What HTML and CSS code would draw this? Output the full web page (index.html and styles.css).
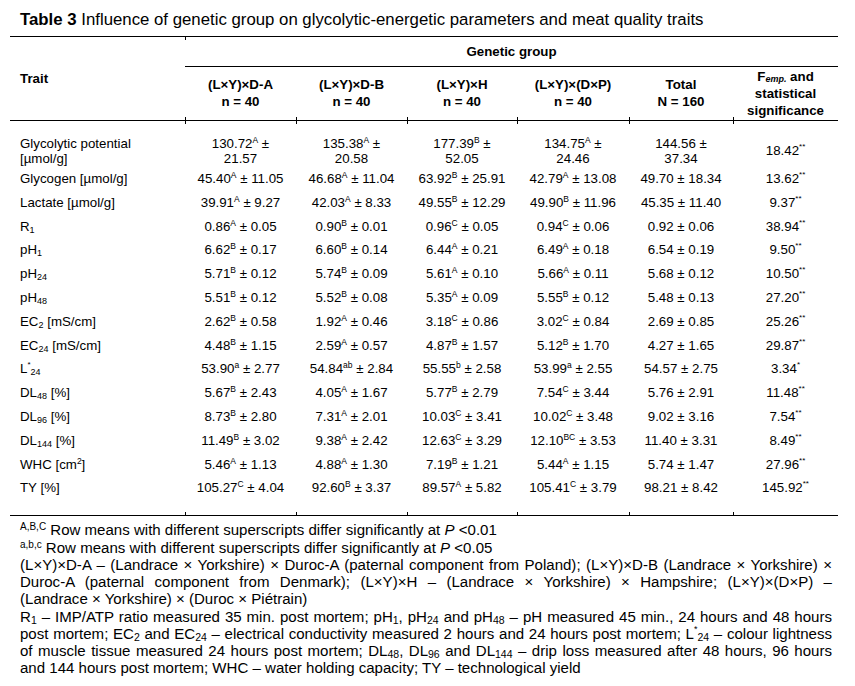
FILE: index.html
```html
<!DOCTYPE html>
<html lang="en">
<head>
<meta charset="utf-8">
<title>Table 3</title>
<link rel="stylesheet" href="styles.css">
</head>
<body>
<div class="page">
  <div class="title"><b>Table 3</b> Influence of genetic group on glycolytic-energetic parameters and meat quality traits</div>
  <table class="data">
    <colgroup>
      <col class="c-trait"><col class="c1"><col class="c2"><col class="c3"><col class="c4"><col class="c5"><col class="c6">
    </colgroup>
    <thead>
      <tr class="h1">
        <th class="trait" rowspan="2">Trait</th>
        <th class="group tt" colspan="6">Genetic group</th>
      </tr>
      <tr class="h2">
        <th class="tb">(L×Y)×D-A<br>n = 40</th>
        <th class="tb">(L×Y)×D-B<br>n = 40</th>
        <th class="tb">(L×Y)×H<br>n = 40</th>
        <th class="tb">(L×Y)×(D×P)<br>n = 40</th>
        <th class="tb">Total<br>N = 160</th>
        <th class="tb">F<span class="emp">emp.</span> and<br>statistical<br>significance</th>
      </tr>
    </thead>
    <tbody>
      <tr class="first">
        <td class="name">Glycolytic potential<br>[µmol/g]</td>
        <td class="tt">130.72<span class="s">A</span> ±<br>21.57</td>
        <td class="tt">135.38<span class="s">A</span> ±<br>20.58</td>
        <td class="tt">177.39<span class="s">B</span> ±<br>52.05</td>
        <td class="tt">134.75<span class="s">A</span> ±<br>24.46</td>
        <td class="tt">144.56 ±<br>37.34</td>
        <td class="tt">18.42<span class="st">**</span></td>
      </tr>
      <tr>
        <td class="name">Glycogen [µmol/g]</td>
        <td>45.40<span class="s">A</span> ± 11.05</td>
        <td>46.68<span class="s">A</span> ± 11.04</td>
        <td>63.92<span class="s">B</span> ± 25.91</td>
        <td>42.79<span class="s">A</span> ± 13.08</td>
        <td>49.70 ± 18.34</td>
        <td>13.62<span class="st">**</span></td>
      </tr>
      <tr>
        <td class="name">Lactate [µmol/g]</td>
        <td>39.91<span class="s">A</span> ± 9.27</td>
        <td>42.03<span class="s">A</span> ± 8.33</td>
        <td>49.55<span class="s">B</span> ± 12.29</td>
        <td>49.90<span class="s">B</span> ± 11.96</td>
        <td>45.35 ± 11.40</td>
        <td>9.37<span class="st">**</span></td>
      </tr>
      <tr>
        <td class="name">R<span class="sb">1</span></td>
        <td>0.86<span class="s">A</span> ± 0.05</td>
        <td>0.90<span class="s">B</span> ± 0.01</td>
        <td>0.96<span class="s">C</span> ± 0.05</td>
        <td>0.94<span class="s">C</span> ± 0.06</td>
        <td>0.92 ± 0.06</td>
        <td>38.94<span class="st">**</span></td>
      </tr>
      <tr>
        <td class="name">pH<span class="sb">1</span></td>
        <td>6.62<span class="s">B</span> ± 0.17</td>
        <td>6.60<span class="s">B</span> ± 0.14</td>
        <td>6.44<span class="s">A</span> ± 0.21</td>
        <td>6.49<span class="s">A</span> ± 0.18</td>
        <td>6.54 ± 0.19</td>
        <td>9.50<span class="st">**</span></td>
      </tr>
      <tr>
        <td class="name">pH<span class="sb">24</span></td>
        <td>5.71<span class="s">B</span> ± 0.12</td>
        <td>5.74<span class="s">B</span> ± 0.09</td>
        <td>5.61<span class="s">A</span> ± 0.10</td>
        <td>5.66<span class="s">A</span> ± 0.11</td>
        <td>5.68 ± 0.12</td>
        <td>10.50<span class="st">**</span></td>
      </tr>
      <tr>
        <td class="name">pH<span class="sb">48</span></td>
        <td>5.51<span class="s">B</span> ± 0.12</td>
        <td>5.52<span class="s">B</span> ± 0.08</td>
        <td>5.35<span class="s">A</span> ± 0.09</td>
        <td>5.55<span class="s">B</span> ± 0.12</td>
        <td>5.48 ± 0.13</td>
        <td>27.20<span class="st">**</span></td>
      </tr>
      <tr>
        <td class="name">EC<span class="sb">2</span> [mS/cm]</td>
        <td>2.62<span class="s">B</span> ± 0.58</td>
        <td>1.92<span class="s">A</span> ± 0.46</td>
        <td>3.18<span class="s">C</span> ± 0.86</td>
        <td>3.02<span class="s">C</span> ± 0.84</td>
        <td>2.69 ± 0.85</td>
        <td>25.26<span class="st">**</span></td>
      </tr>
      <tr>
        <td class="name">EC<span class="sb">24</span> [mS/cm]</td>
        <td>4.48<span class="s">B</span> ± 1.15</td>
        <td>2.59<span class="s">A</span> ± 0.57</td>
        <td>4.87<span class="s">B</span> ± 1.57</td>
        <td>5.12<span class="s">B</span> ± 1.70</td>
        <td>4.27 ± 1.65</td>
        <td>29.87<span class="st">**</span></td>
      </tr>
      <tr>
        <td class="name">L<span class="st">*</span><span class="sb">24</span></td>
        <td>53.90<span class="s">a</span> ± 2.77</td>
        <td>54.84<span class="s">ab</span> ± 2.84</td>
        <td>55.55<span class="s">b</span> ± 2.58</td>
        <td>53.99<span class="s">a</span> ± 2.55</td>
        <td>54.57 ± 2.75</td>
        <td>3.34<span class="st">*</span></td>
      </tr>
      <tr>
        <td class="name">DL<span class="sb">48</span> [%]</td>
        <td>5.67<span class="s">B</span> ± 2.43</td>
        <td>4.05<span class="s">A</span> ± 1.67</td>
        <td>5.77<span class="s">B</span> ± 2.79</td>
        <td>7.54<span class="s">C</span> ± 3.44</td>
        <td>5.76 ± 2.91</td>
        <td>11.48<span class="st">**</span></td>
      </tr>
      <tr>
        <td class="name">DL<span class="sb">96</span> [%]</td>
        <td>8.73<span class="s">B</span> ± 2.80</td>
        <td>7.31<span class="s">A</span> ± 2.01</td>
        <td>10.03<span class="s">C</span> ± 3.41</td>
        <td>10.02<span class="s">C</span> ± 3.48</td>
        <td>9.02 ± 3.16</td>
        <td>7.54<span class="st">**</span></td>
      </tr>
      <tr>
        <td class="name">DL<span class="sb">144</span> [%]</td>
        <td>11.49<span class="s">B</span> ± 3.02</td>
        <td>9.38<span class="s">A</span> ± 2.42</td>
        <td>12.63<span class="s">C</span> ± 3.29</td>
        <td>12.10<span class="s">BC</span> ± 3.53</td>
        <td>11.40 ± 3.31</td>
        <td>8.49<span class="st">**</span></td>
      </tr>
      <tr>
        <td class="name">WHC [cm<span class="s">2</span>]</td>
        <td>5.46<span class="s">A</span> ± 1.13</td>
        <td>4.88<span class="s">A</span> ± 1.30</td>
        <td>7.19<span class="s">B</span> ± 1.21</td>
        <td>5.44<span class="s">A</span> ± 1.15</td>
        <td>5.74 ± 1.47</td>
        <td>27.96<span class="st">**</span></td>
      </tr>
      <tr class="last">
        <td class="name">TY [%]</td>
        <td class="tb">105.27<span class="s">C</span> ± 4.04</td>
        <td class="tb">92.60<span class="s">B</span> ± 3.37</td>
        <td class="tb">89.57<span class="s">A</span> ± 5.82</td>
        <td class="tb">105.41<span class="s">C</span> ± 3.79</td>
        <td class="tb">98.21 ± 8.42</td>
        <td class="tb">145.92<span class="st">**</span></td>
      </tr>
    </tbody>
  </table>
  <div class="notes">
    <p class="line"><span class="fs">A,B,C</span> Row means with different superscripts differ significantly at <i>P</i> &lt;0.01</p>
    <p class="line"><span class="fs">a,b,c</span> Row means with different superscripts differ significantly at <i>P</i> &lt;0.05</p>
    <p class="just">(L×Y)×D-A – (Landrace × Yorkshire) × Duroc-A (paternal component from Poland); (L×Y)×D-B (Landrace × Yorkshire) ×</p>
    <p class="just">Duroc-A (paternal component from Denmark); (L×Y)×H – (Landrace × Yorkshire) × Hampshire; (L×Y)×(D×P) –</p>
    <p class="line">(Landrace × Yorkshire) × (Duroc × Piétrain)</p>
    <p class="just">R<span class="fb">1</span> – IMP/ATP ratio measured 35 min. post mortem; pH<span class="fb">1</span>, pH<span class="fb">24</span> and pH<span class="fb">48</span> – pH measured 45 min., 24 hours and 48 hours</p>
    <p class="just">post mortem; EC<span class="fb">2</span> and EC<span class="fb">24</span> – electrical conductivity measured 2 hours and 24 hours post mortem; L<span class="fst">*</span><span class="fb">24</span> – colour lightness</p>
    <p class="just">of muscle tissue measured 24 hours post mortem; DL<span class="fb">48</span>, DL<span class="fb">96</span> and DL<span class="fb">144</span> – drip loss measured after 48 hours, 96 hours</p>
    <p class="line">and 144 hours post mortem; WHC – water holding capacity; TY – technological yield</p>
  </div>
</div>
</body>
</html>
```

FILE: styles.css
```css
html, body {
  margin: 0;
  padding: 0;
  background: #ffffff;
  color: #000000;
  font-family: "Liberation Sans", Arial, sans-serif;
}

.page {
  padding: 10px 0 0 10px;
  width: 828px;
}

.title {
  font-size: 16.8px;
  line-height: 19px;
  margin: 0 0 7px 10px;
  white-space: nowrap;
}

.data {
  width: 828px;
  table-layout: fixed;
  border-collapse: collapse;
  font-size: 13.3px;
}

.c-trait { width: 175px; }
.c1 { width: 111px; }
.c2 { width: 111px; }
.c3 { width: 110px; }
.c4 { width: 112px; }
.c5 { width: 104px; }
.c6 { width: 105px; }

.data thead th {
  font-weight: bold;
  text-align: center;
  vertical-align: middle;
  line-height: 17px;
  padding: 0;
}

.data thead tr.h1 th {
  border-top: 1px solid #000;
  height: 29px;
}

.data thead tr.h2 th {
  border-bottom: 1px solid #000;
  height: 52px;
  padding-bottom: 1px;
}

.data th.trait {
  text-align: left;
  padding-left: 10px;
  border-bottom: 1px solid #000;
}

.data th.group {
  border-bottom: 1px solid #000;
}

.emp {
  font-size: 9px;
  font-style: italic;
  line-height: 0;
  vertical-align: -1px;
}

.data td {
  text-align: center;
  vertical-align: middle;
  line-height: 15.8px;
  padding: 4px 0;
  white-space: nowrap;
}

.data td.name {
  text-align: left;
  padding-left: 10px;
}

.data tr.first td {
  padding-top: 14.5px;
  padding-bottom: 0;
}

.data tr.last td {
  padding-bottom: 19px;
  border-bottom: 1px solid #000;
}

/* small column ticks on the rules */
.tt {
  background: linear-gradient(#000, #000) left top / 1px 3px no-repeat;
}
.tb {
  background: linear-gradient(#000, #000) left bottom / 1px 3px no-repeat;
}
.data td.name,
.data th.trait {
  background: none;
}

.s {
  font-size: 8.5px;
  line-height: 0;
  vertical-align: 5px;
}

.st {
  font-size: 8px;
  line-height: 0;
  vertical-align: 6px;
}

.sb {
  font-size: 9px;
  line-height: 0;
  vertical-align: -2px;
}

.notes {
  margin: 5px 0 0 10px;
  width: 812px;
  font-size: 15.05px;
  line-height: 17.25px;
}

.notes p {
  margin: 0;
  white-space: nowrap;
}

.notes p.just {
  text-align: justify;
  text-align-last: justify;
  white-space: normal;
}

.fs {
  font-size: 10px;
  line-height: 0;
  vertical-align: 5px;
}

.fb {
  font-size: 10.5px;
  line-height: 0;
  vertical-align: -2px;
}

.fst {
  font-size: 9px;
  line-height: 0;
  vertical-align: 7px;
}
```
